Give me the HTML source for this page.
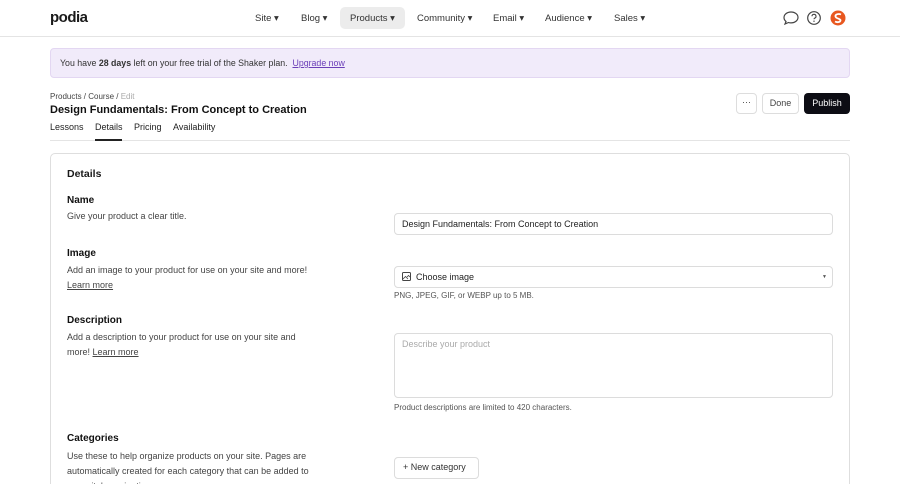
<!DOCTYPE html>
<html><head><meta charset="utf-8"><style>
*{margin:0;padding:0;box-sizing:border-box}
html,body{width:900px;height:484px;overflow:hidden}
body{background:#fff;font-family:"Liberation Sans",sans-serif;color:#1a1a1a;position:relative}
.a{position:absolute;white-space:nowrap}
.nav{font-size:9.5px;color:#333}
.s{font-size:9px;color:#444}
.h{font-size:10px;font-weight:bold;color:#111}
.inp{position:absolute;border:1px solid #dcdcdc;border-radius:4px;background:#fff}
u{text-decoration:underline}
</style></head><body>
<div class="a" style="left:50px;top:9px;font-size:15px;font-weight:bold;letter-spacing:-0.5px">podia</div>
<div class="a nav" style="left:255px;top:13px">Site ▾</div>
<div class="a nav" style="left:301px;top:13px">Blog ▾</div>
<div class="a" style="left:340px;top:7px;width:65px;height:22px;background:#ececec;border-radius:5px"></div>
<div class="a nav" style="left:350px;top:13px">Products ▾</div>
<div class="a nav" style="left:417px;top:13px">Community ▾</div>
<div class="a nav" style="left:493px;top:13px">Email ▾</div>
<div class="a nav" style="left:545px;top:13px">Audience ▾</div>
<div class="a nav" style="left:614px;top:13px">Sales ▾</div>
<svg class="a" style="left:782px;top:10px" width="18" height="16" viewBox="0 0 18 16"><path d="M9 2C5 2 2 4.5 2 7.5c0 1.6.8 3 2 4L3 14l3.5-1.5c.8.3 1.6.4 2.5.4 4 0 7-2.5 7-5.5S13 2 9 2z" fill="none" stroke="#444" stroke-width="1.2"/></svg>
<svg class="a" style="left:806px;top:10px" width="16" height="16" viewBox="0 0 16 16"><circle cx="8" cy="8" r="6.3" fill="none" stroke="#444" stroke-width="1.2"/><path d="M6 6.3a2 2 0 1 1 2.6 1.9c-.5.2-.6.5-.6 1.1" fill="none" stroke="#444" stroke-width="1.1"/><circle cx="8" cy="11.2" r=".7" fill="#444"/></svg>
<svg class="a" style="left:830px;top:10px" width="16" height="16" viewBox="0 0 16 16"><circle cx="8" cy="8" r="7.5" fill="#e8571f"/><path d="M11 4.5C9 3.5 5 4 5.5 6.5S11 8.5 10.5 10.5 7 12.5 5 11.5" fill="none" stroke="#fff" stroke-width="1.8"/></svg>
<div class="a" style="left:0;top:36px;width:900px;height:1px;background:#e4e4e4"></div>
<div class="a" style="left:50px;top:48px;width:800px;height:30px;background:#f1ebfa;border:1px solid #e3d7f2;border-radius:4px"></div>
<div class="a" style="left:60px;top:58px;font-size:8.8px;color:#333">You have <b>28 days</b> left on your free trial of the Shaker plan.&nbsp; <u style="color:#6b3fb8">Upgrade now</u></div>
<div class="a" style="left:50px;top:92px;font-size:8px;color:#444">Products / Course / <span style="color:#aaa">Edit</span></div>
<div class="a" style="left:50px;top:104px;font-size:11px;font-weight:bold;color:#111">Design Fundamentals: From Concept to Creation</div>
<div class="a" style="left:50px;top:122px;font-size:9px;color:#222">Lessons</div>
<div class="a" style="left:95px;top:122px;font-size:9px;color:#222">Details</div>
<div class="a" style="left:134px;top:122px;font-size:9px;color:#222">Pricing</div>
<div class="a" style="left:173px;top:122px;font-size:9px;color:#222">Availability</div>
<div class="a" style="left:50px;top:140px;width:800px;height:1px;background:#e4e4e4"></div>
<div class="a" style="left:95px;top:139px;width:27px;height:2px;background:#222"></div>
<div class="a" style="left:736px;top:93px;width:21px;height:21px;border:1px solid #ddd;border-radius:4px;font-size:9px;text-align:center;line-height:17px;color:#444">···</div>
<div class="a" style="left:762px;top:93px;width:37px;height:21px;border:1px solid #ddd;border-radius:4px;font-size:9px;text-align:center;line-height:19px;color:#444">Done</div>
<div class="a" style="left:804px;top:93px;width:46px;height:21px;background:#0d0d14;border-radius:4px;font-size:9px;text-align:center;line-height:21px;color:#fff">Publish</div>
<div class="a" style="left:50px;top:153px;width:800px;height:345px;border:1px solid #dedede;border-radius:5px"></div>
<div class="a" style="left:67px;top:168px;font-size:10.5px;font-weight:bold">Details</div>
<div class="a h" style="left:67px;top:195px">Name</div>
<div class="a s" style="left:67px;top:211px">Give your product a clear title.</div>
<div class="a h" style="left:67px;top:248px">Image</div>
<div class="a s" style="left:67px;top:263px;line-height:15px">Add an image to your product for use on your site and more!<br><u>Learn more</u></div>
<div class="a h" style="left:67px;top:315px">Description</div>
<div class="a s" style="left:67px;top:330px;line-height:15px">Add a description to your product for use on your site and<br>more! <u>Learn more</u></div>
<div class="a h" style="left:67px;top:433px">Categories</div>
<div class="a s" style="left:67px;top:449px;line-height:15px">Use these to help organize products on your site. Pages are<br>automatically created for each category that can be added to<br>your site's navigation.</div>
<div class="inp" style="left:394px;top:213px;width:439px;height:22px"></div>
<div class="a" style="left:402px;top:219px;font-size:9px;color:#222">Design Fundamentals: From Concept to Creation</div>
<div class="inp" style="left:394px;top:266px;width:439px;height:22px"></div>
<svg class="a" style="left:402px;top:272px" width="9" height="9" viewBox="0 0 9 9"><rect x=".5" y=".5" width="8" height="8" rx="1" fill="none" stroke="#444"/><path d="M1 7l2.5-2.5L6 7M5 5l1.5-1.5L8 5" fill="none" stroke="#444" stroke-width=".8"/></svg>
<div class="a" style="left:416px;top:272px;font-size:9px;color:#222">Choose image</div>
<div class="a" style="left:822px;top:274px;font-size:5px;color:#555">▼</div>
<div class="a s" style="left:394px;top:291px;font-size:8px;color:#555">PNG, JPEG, GIF, or WEBP up to 5 MB.</div>
<div class="inp" style="left:394px;top:333px;width:439px;height:65px"></div>
<div class="a" style="left:402px;top:339px;font-size:9px;color:#aaa">Describe your product</div>
<div class="a s" style="left:394px;top:403px;font-size:8px;color:#555">Product descriptions are limited to 420 characters.</div>
<div class="inp" style="left:394px;top:457px;width:85px;height:22px"></div>
<div class="a" style="left:403px;top:462px;font-size:9px;color:#333">+ New category</div>
</body></html>
